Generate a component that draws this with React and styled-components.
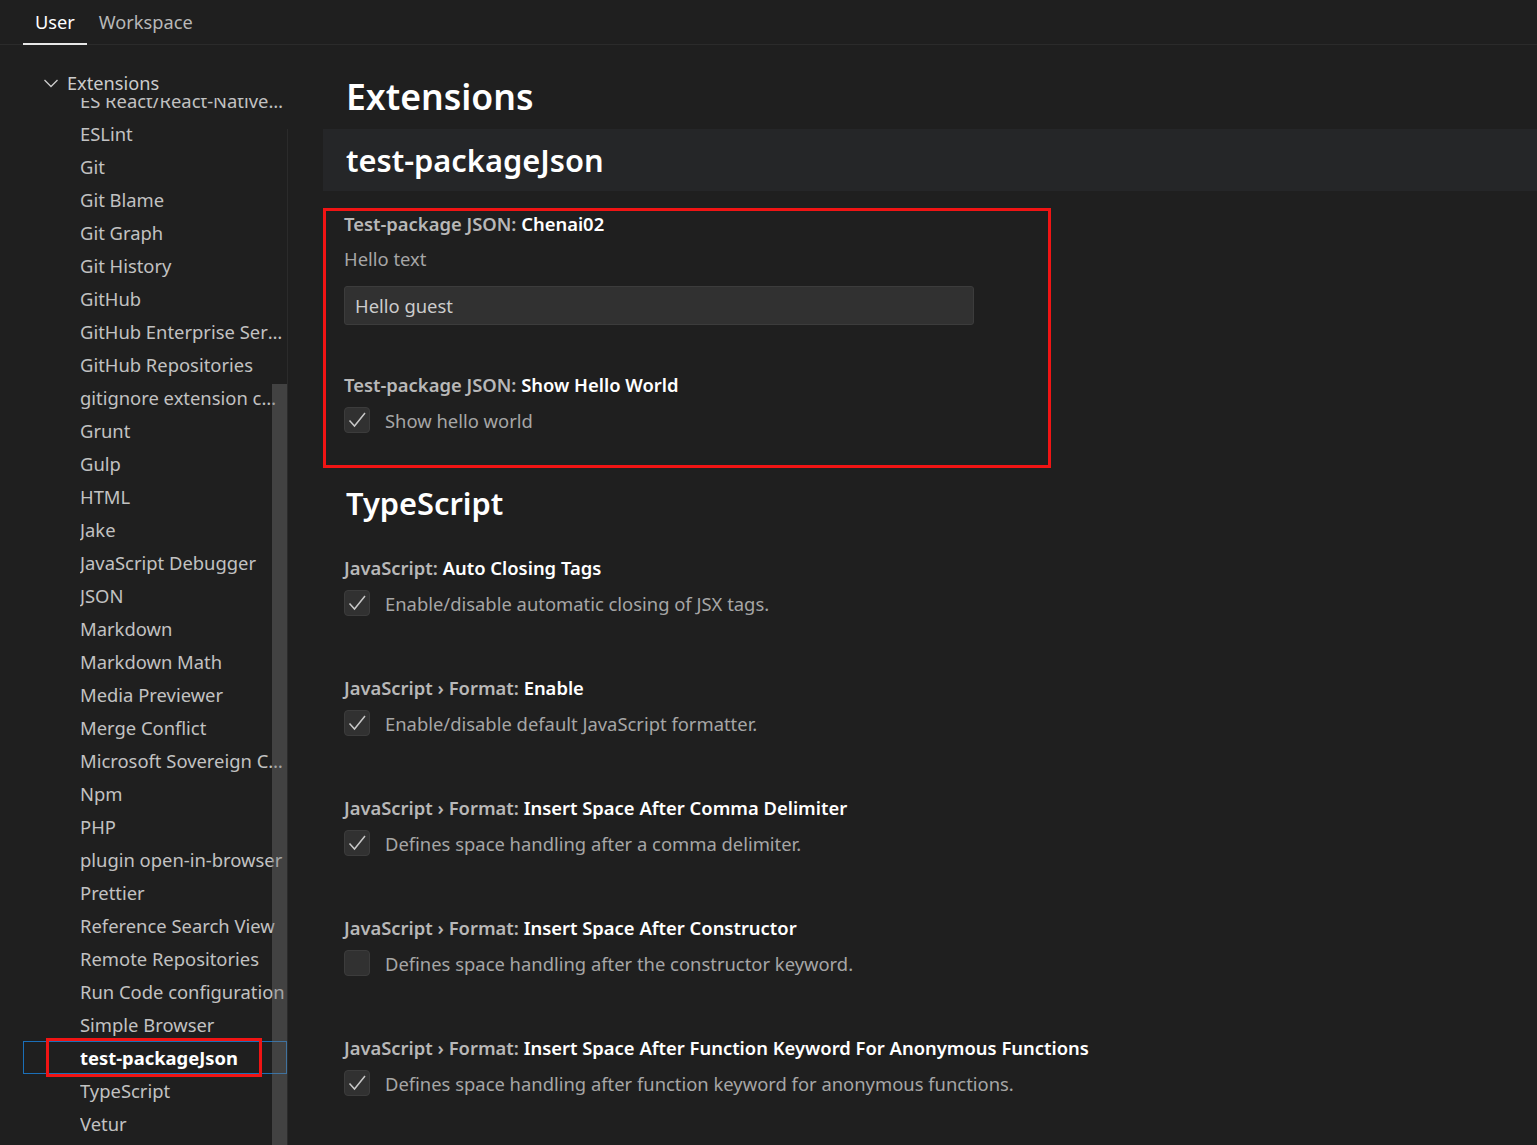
import React from "react";
import styled, { createGlobalStyle } from "styled-components";

const GlobalStyle = createGlobalStyle`
    html, body{
        margin: 0;
        padding: 0;
        background-color: #1f1f1f;
    }
    body{
        font-family: "Noto Sans", "Open Sans", sans-serif;
        color: #cccccc;
        overflow: hidden;
    }
`

const Page = styled.div`
    width: 1537px;
    height: 1145px;
    display: flex;
    flex-direction: column;
    overflow: hidden;
    background-color: #1f1f1f;
`

const TabBar = styled.div`
    display: flex;
    height: 44px;
    padding-left: 23px;
    border-bottom: 1px solid #2b2b2b;
    flex-shrink: 0;
`

const Tab = styled.div`
    display: flex;
    align-items: center;
    padding: 0 12px;
    font-size: 18.2px;
    color: ${(p) => (p.active ? "#ffffff" : "#b8b8b8")};
    border-bottom: 2px solid ${(p) => (p.active ? "#e7e7e7" : "transparent")};
    margin-bottom: -1px;
`

const Body = styled.div`
    flex: 1;
    display: flex;
    min-height: 0;
`

const Sidebar = styled.div`
    width: 288px;
    display: flex;
    flex-shrink: 0;
`

const TreePane = styled.div`
    width: 287px;
    display: flex;
    flex-direction: column;
    padding-top: 22px;
`

const Sash = styled.div`
    width: 1px;
    margin-top: 84px;
    background-color: #2b2b2b;
`

const TreeHeader = styled.div`
    display: flex;
    align-items: center;
    height: 31px;
    padding-left: 43px;
    gap: 8px;
    font-size: 18.2px;
    color: #cccccc;
    flex-shrink: 0;
    position: relative;
    z-index: 1;
    background-color: #1f1f1f;
`

const TreeViewport = styled.div`
    position: relative;
    flex: 1;
    overflow: hidden;
`

const TreeList = styled.div`
    margin-top: -14px;
    padding-left: 23px;
`

const TreeRow = styled.div`
    position: relative;
    height: 33px;
    display: flex;
    align-items: center;
    padding-left: 56px;
    box-sizing: border-box;
    border: 1px solid ${(p) => (p.selected ? "#1b6fb8" : "transparent")};
`

const TreeLabel = styled.span`
    display: block;
    width: 207px;
    white-space: nowrap;
    overflow: hidden;
    text-overflow: ellipsis;
    font-size: 18.4px;
    font-weight: ${(p) => (p.selected ? 700 : 400)};
    color: ${(p) => (p.selected ? "#ffffff" : "#c2c2c2")};
`

const Marker = styled.span`
    position: absolute;
    left: 22px;
    top: -4px;
    width: 216px;
    height: 39px;
    box-sizing: border-box;
    border: 3px solid #f01414;
    pointer-events: none;
`

const ScrollThumb = styled.div`
    position: absolute;
    right: 0;
    top: 286px;
    bottom: 0;
    width: 15px;
    background-color: rgba(121, 121, 121, 0.4);
`

const Main = styled.div`
    flex: 1;
    display: flex;
    flex-direction: column;
    padding-left: 35px;
`

const PageTitle = styled.h1`
    margin: 0;
    padding: 24px 0 6px 23px;
    font-size: 35.6px;
    line-height: 54px;
    font-weight: 600;
    color: #ffffff;
`

const CategoryBand = styled.div`
    height: 62px;
    display: flex;
    align-items: center;
    padding-left: 23px;
    background-color: #252628;
    font-size: 30.8px;
    font-weight: 600;
    color: #ffffff;
`

const CategoryTitle = styled.h2`
    margin: 12px 0 0 0;
    padding-left: 23px;
    height: 46px;
    line-height: 46px;
    font-size: 30.8px;
    font-weight: 600;
    color: #ffffff;
`

const Highlight = styled.div`
    margin-top: 17px;
    width: 728px;
    height: 260px;
    box-sizing: border-box;
    border: 3px solid #f01414;
`

const Setting = styled.div`
    padding-left: ${(p) => p.indent}px;
    padding-top: ${(p) => p.top || 0}px;
    display: flex;
    flex-direction: column;
`

const SettingTitle = styled.div`
    height: 26px;
    line-height: 26px;
    font-size: 18.4px;
    font-weight: 600;
    color: #b8b8b8;
    white-space: nowrap;
    & > b{
        color: #ffffff;
        font-weight: 600;
    }
`

const Description = styled.div`
    margin-top: 9px;
    height: 26px;
    line-height: 26px;
    font-size: 18.4px;
    color: #a6a6a6;
`

const TextInput = styled.div`
    margin-top: 14px;
    width: 630px;
    height: 39px;
    box-sizing: border-box;
    display: flex;
    align-items: center;
    padding-left: 10px;
    background-color: #313131;
    border: 1px solid #3c3c3c;
    border-radius: 3px;
    font-size: 18.4px;
    color: #cccccc;
`

const CheckRow = styled.div`
    margin-top: 9px;
    display: flex;
    align-items: center;
    gap: 15px;
    height: 26px;
    font-size: 18.4px;
    color: #a6a6a6;
    white-space: nowrap;
`

const Box = styled.div`
    width: 26px;
    height: 26px;
    box-sizing: border-box;
    background-color: #313131;
    border: 1px solid #3c3c3c;
    border-radius: 4px;
    display: flex;
    align-items: center;
    justify-content: center;
    flex-shrink: 0;
`

const Chevron = () => (
    <svg width="16" height="16" viewBox="0 0 16 16" fill="none">
        <path d="M1.5 5l6.5 6.5L14.5 5" stroke="#cccccc" strokeWidth="1.3" />
    </svg>
)

const Check = ({ checked }) => (
    <Box>
        {checked && (
            <svg width="22" height="22" viewBox="0 0 22 22" fill="none">
                <path d="M3.5 11.5l5 5.5L19 4" stroke="#c8c8c8" strokeWidth="1.5" />
            </svg>
        )}
    </Box>
)

const treeItems = [
    "ES React/React-Native/Redux snippets",
    "ESLint",
    "Git",
    "Git Blame",
    "Git Graph",
    "Git History",
    "GitHub",
    "GitHub Enterprise Server Authentication",
    "GitHub Repositories",
    "gitignore extension configuration",
    "Grunt",
    "Gulp",
    "HTML",
    "Jake",
    "JavaScript Debugger",
    "JSON",
    "Markdown",
    "Markdown Math",
    "Media Previewer",
    "Merge Conflict",
    "Microsoft Sovereign Cloud",
    "Npm",
    "PHP",
    "plugin open-in-browser",
    "Prettier",
    "Reference Search View",
    "Remote Repositories",
    "Run Code configuration",
    "Simple Browser",
    "test-packageJson",
    "TypeScript",
    "Vetur",
];

const tsSettings = [
    { cat: "JavaScript: ", key: "Auto Closing Tags", desc: "Enable/disable automatic closing of JSX tags.", on: true },
    { cat: "JavaScript › Format: ", key: "Enable", desc: "Enable/disable default JavaScript formatter.", on: true },
    { cat: "JavaScript › Format: ", key: "Insert Space After Comma Delimiter", desc: "Defines space handling after a comma delimiter.", on: true },
    { cat: "JavaScript › Format: ", key: "Insert Space After Constructor", desc: "Defines space handling after the constructor keyword.", on: false },
    { cat: "JavaScript › Format: ", key: "Insert Space After Function Keyword For Anonymous Functions", desc: "Defines space handling after function keyword for anonymous functions.", on: true },
];

const App = () => {
    const selected = "test-packageJson";

    return (
        <Page>
            <GlobalStyle />
            <TabBar>
                <Tab active>User</Tab>
                <Tab>Workspace</Tab>
            </TabBar>
            <Body>
                <Sidebar>
                    <TreePane>
                        <TreeHeader>
                            <Chevron />
                            Extensions
                        </TreeHeader>
                        <TreeViewport>
                            <TreeList>
                                {treeItems.map((item) => (
                                    <TreeRow key={item} selected={item === selected}>
                                        <TreeLabel selected={item === selected}>{item}</TreeLabel>
                                        {item === selected && <Marker />}
                                    </TreeRow>
                                ))}
                            </TreeList>
                            <ScrollThumb />
                        </TreeViewport>
                    </TreePane>
                    <Sash />
                </Sidebar>
                <Main>
                    <PageTitle>Extensions</PageTitle>
                    <CategoryBand>test-packageJson</CategoryBand>
                    <Highlight>
                        <Setting indent={18}>
                            <SettingTitle>Test-package JSON: <b>Chenai02</b></SettingTitle>
                            <Description>Hello text</Description>
                            <TextInput>Hello guest</TextInput>
                        </Setting>
                        <Setting indent={18} top={47}>
                            <SettingTitle>Test-package JSON: <b>Show Hello World</b></SettingTitle>
                            <CheckRow>
                                <Check checked />
                                Show hello world
                            </CheckRow>
                        </Setting>
                    </Highlight>
                    <CategoryTitle>TypeScript</CategoryTitle>
                    {tsSettings.map((s, i) => (
                        <Setting key={s.key} indent={21} top={i === 0 ? 29 : 59}>
                            <SettingTitle>{s.cat}<b>{s.key}</b></SettingTitle>
                            <CheckRow>
                                <Check checked={s.on} />
                                {s.desc}
                            </CheckRow>
                        </Setting>
                    ))}
                </Main>
            </Body>
        </Page>
    );
}

export default App;
